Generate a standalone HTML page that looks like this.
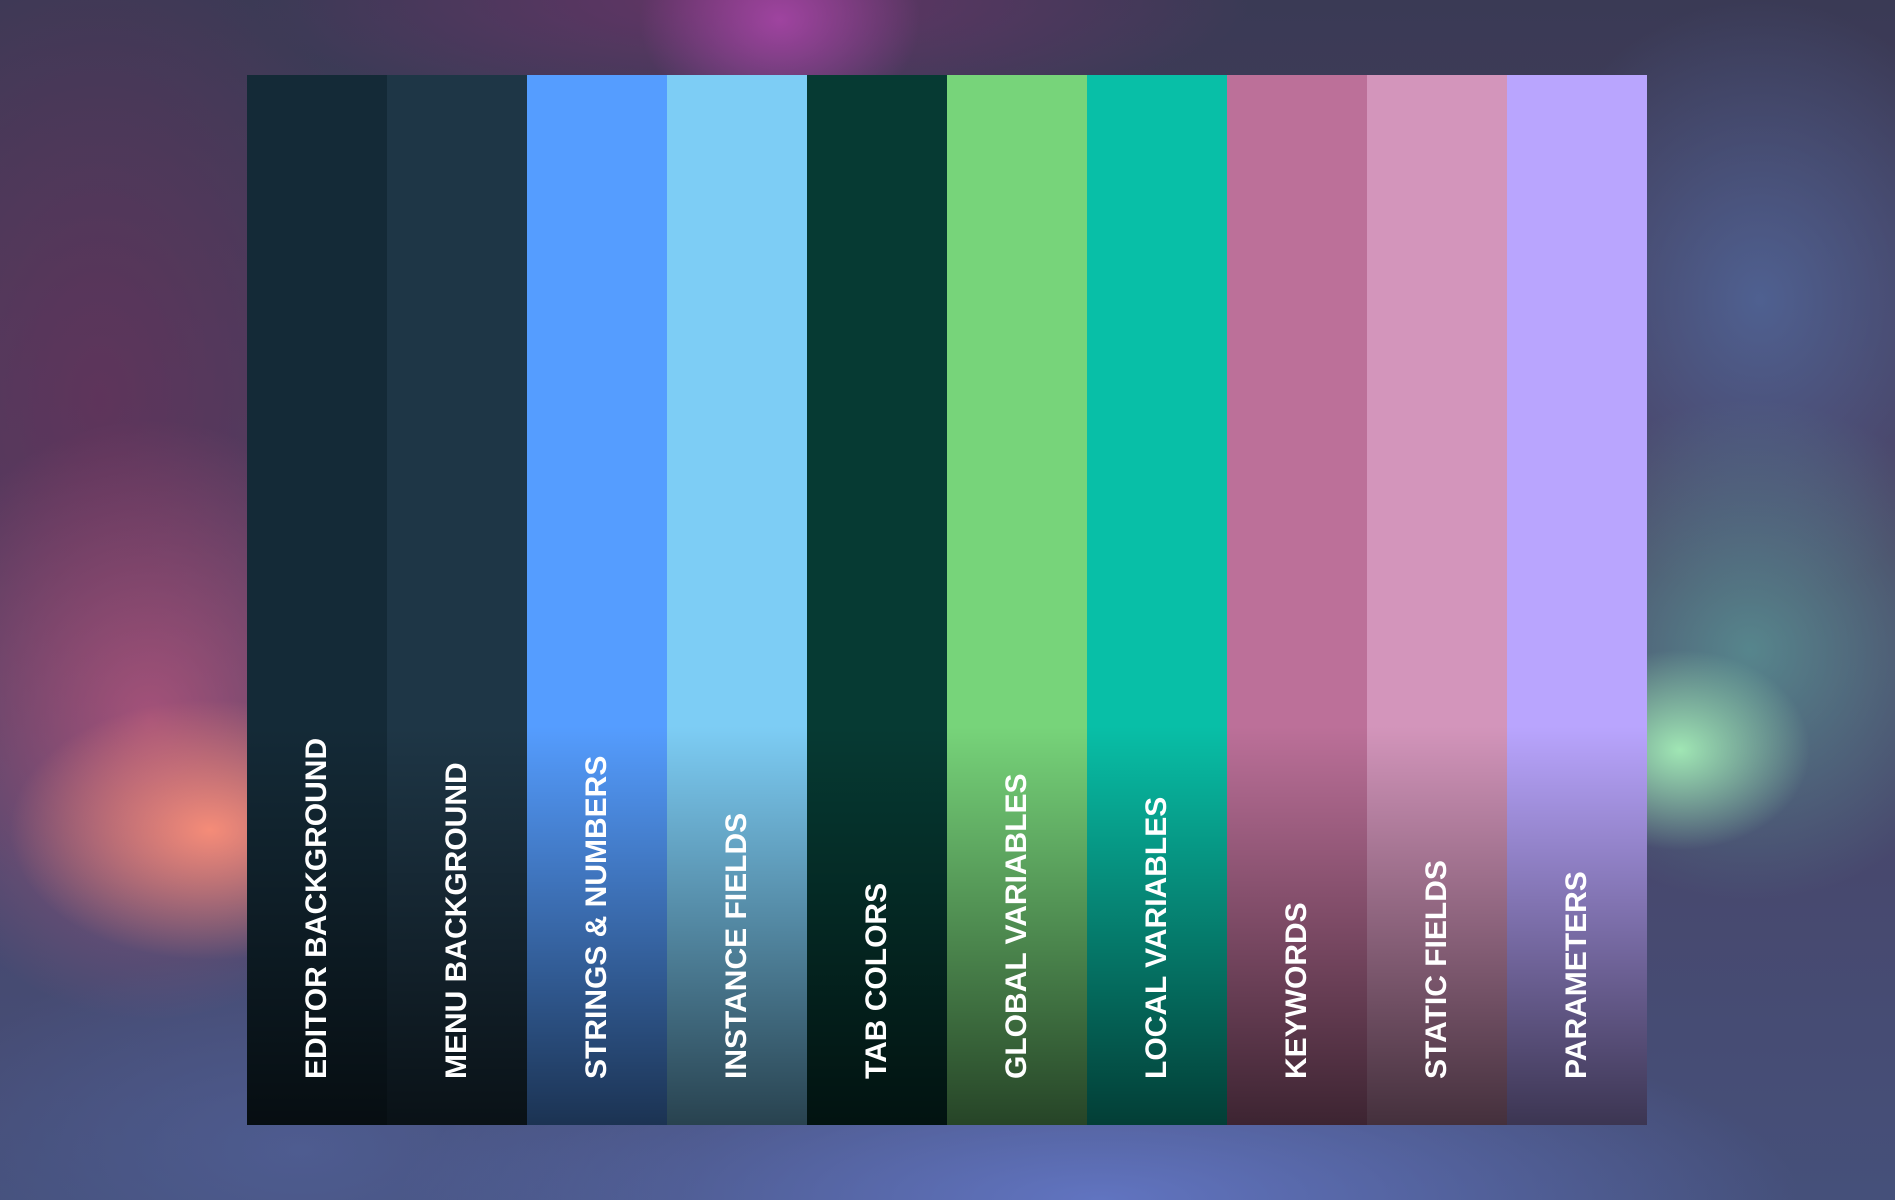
<!DOCTYPE html>
<html><head><meta charset="utf-8"><style>
html,body{margin:0;padding:0;width:1895px;height:1200px;overflow:hidden;}
body{position:relative;background:#3f4568;font-family:"Liberation Sans",sans-serif;}
.bg{position:absolute;inset:0;background:
radial-gradient(ellipse 140px 110px at 780px 20px,rgba(170,70,170,.85),transparent),
radial-gradient(ellipse 500px 120px at 750px 0px,rgba(120,50,110,.7),transparent),
radial-gradient(ellipse 200px 130px at 210px 830px,rgba(245,140,120,1),transparent),
radial-gradient(ellipse 260px 300px at 150px 720px,rgba(200,90,130,.7),transparent),
radial-gradient(ellipse 300px 500px at 100px 400px,rgba(100,50,90,.8),transparent),
radial-gradient(ellipse 130px 100px at 1680px 750px,rgba(160,230,180,1),transparent),
radial-gradient(ellipse 250px 250px at 1750px 650px,rgba(90,150,150,.8),transparent),
radial-gradient(ellipse 250px 300px at 1760px 300px,rgba(80,100,150,.9),transparent),
radial-gradient(ellipse 700px 200px at 1100px 1200px,rgba(100,120,200,.9),transparent),
radial-gradient(ellipse 400px 200px at 300px 1150px,rgba(80,95,150,.8),transparent),
linear-gradient(180deg,#3a3a55 0%,#4a3f60 40%,#45507a 100%);}
.panel{position:absolute;left:247px;top:75px;width:1400px;height:1050px;display:flex;}
.col{width:140px;height:100%;position:relative;}
.col::after{content:"";position:absolute;inset:0;background:linear-gradient(180deg,transparent 0%,transparent 62%,rgba(0,0,0,.68) 100%);}
.col span{position:absolute;left:50%;bottom:16px;transform-origin:0 0;transform:rotate(-90deg) translateY(-50%);white-space:nowrap;color:#fff;font-weight:bold;font-size:30px;z-index:2;line-height:1;}
</style></head><body>
<div class="bg"></div>
<div class="panel">
<div class="col" style="background:#142a37"><span>EDITOR BACKGROUND</span></div>
<div class="col" style="background:#1e3646"><span>MENU BACKGROUND</span></div>
<div class="col" style="background:#559dff"><span>STRINGS &amp; NUMBERS</span></div>
<div class="col" style="background:#7dcdf5"><span>INSTANCE FIELDS</span></div>
<div class="col" style="background:#063a33"><span>TAB COLORS</span></div>
<div class="col" style="background:#77d47a"><span>GLOBAL VARIABLES</span></div>
<div class="col" style="background:#08bfa7"><span>LOCAL VARIABLES</span></div>
<div class="col" style="background:#bc7099"><span>KEYWORDS</span></div>
<div class="col" style="background:#d395bb"><span>STATIC FIELDS</span></div>
<div class="col" style="background:#b9a5fe"><span>PARAMETERS</span></div>
</div>
</body></html>
